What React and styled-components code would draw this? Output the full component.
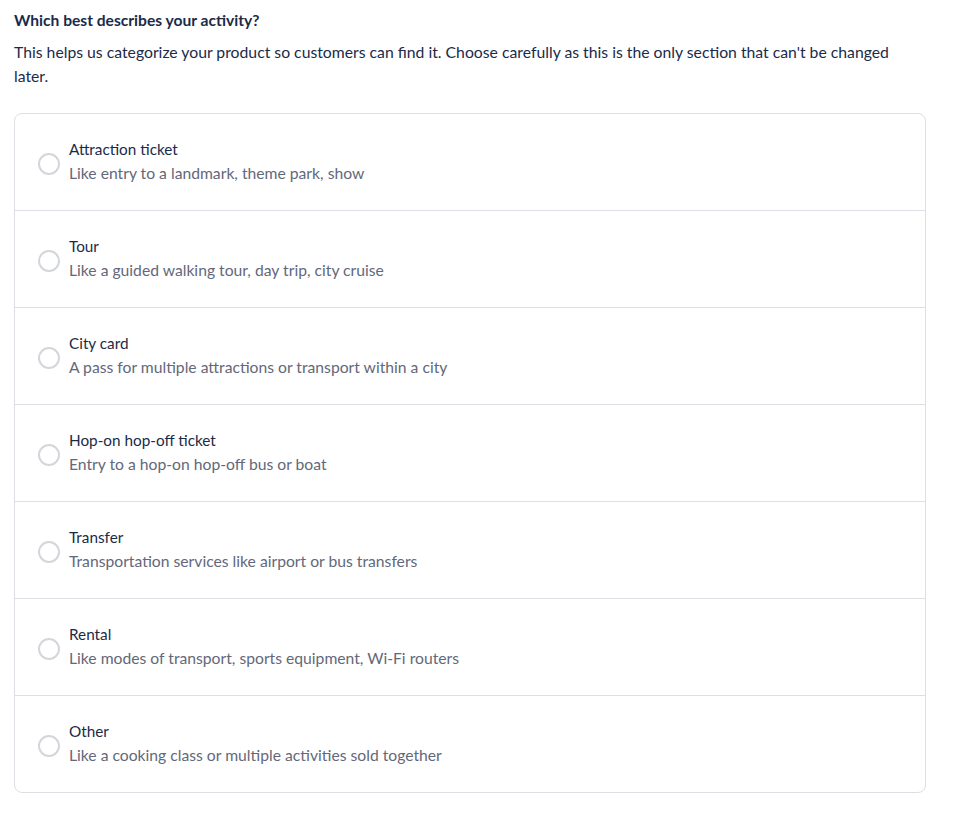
import React, { useState } from "react";
import styled, { createGlobalStyle } from "styled-components";

const GlobalStyle = createGlobalStyle`
	body {
		margin: 0;
		background: #ffffff;
		font-family: "Lato", "Noto Sans", sans-serif;
		color: #1a2b49;
	}
`;

const options = [
	{ title: "Attraction ticket", desc: "Like entry to a landmark, theme park, show" },
	{ title: "Tour", desc: "Like a guided walking tour, day trip, city cruise" },
	{ title: "City card", desc: "A pass for multiple attractions or transport within a city" },
	{ title: "Hop-on hop-off ticket", desc: "Entry to a hop-on hop-off bus or boat" },
	{ title: "Transfer", desc: "Transportation services like airport or bus transfers" },
	{ title: "Rental", desc: "Like modes of transport, sports equipment, Wi-Fi routers" },
	{ title: "Other", desc: "Like a cooking class or multiple activities sold together" },
];

function App() {
	const [selected, setSelected] = useState(null);

	return (
		<Page>
			<GlobalStyle />
			<Heading>Which best describes your activity?</Heading>
			<Intro>
				This helps us categorize your product so customers can find it. Choose carefully as this is
				the only section that can't be changed later.
			</Intro>
			<Card>
				{options.map((opt, i) => (
					<Option key={opt.title} onClick={() => setSelected(i)}>
						<Radio $checked={selected === i} />
						<Label>
							<Title>{opt.title}</Title>
							<Desc>{opt.desc}</Desc>
						</Label>
					</Option>
				))}
			</Card>
		</Page>
	);
}

export default App;

const Page = styled.div`
	width: 912px;
	padding: 8px 0 0 14px;
`;

const Heading = styled.h2`
	margin: 0;
	font-size: 15.6px;
	font-weight: 700;
	line-height: 24px;
	color: #1a2b49;
`;

const Intro = styled.p`
	margin: 8px 0 25px;
	font-size: 15.75px;
	line-height: 24px;
	color: #1a2b49;
`;

const Card = styled.div`
	border: 1px solid #dcdfe4;
	border-radius: 8px;
	display: flex;
	flex-direction: column;
`;

const Option = styled.label`
	display: flex;
	align-items: center;
	gap: 9px;
	height: 96px;
	padding: 0 23px;
	cursor: pointer;

	& + & {
		border-top: 1px solid #dcdfe4;
	}
`;

const Radio = styled.span`
	flex: none;
	width: 22px;
	height: 22px;
	box-sizing: border-box;
	border-radius: 50%;
	border: ${(p) => (p.$checked ? "7px solid #0071eb" : "2px solid #d3d6db")};
	margin-top: 4px;
`;

const Label = styled.div`
	display: flex;
	flex-direction: column;
	margin-top: -2px;
`;

const Title = styled.span`
	font-size: 15.3px;
	line-height: 24px;
	color: #1a2b49;
`;

const Desc = styled.span`
	font-size: 15.7px;
	line-height: 24px;
	color: #63687a;
`;
